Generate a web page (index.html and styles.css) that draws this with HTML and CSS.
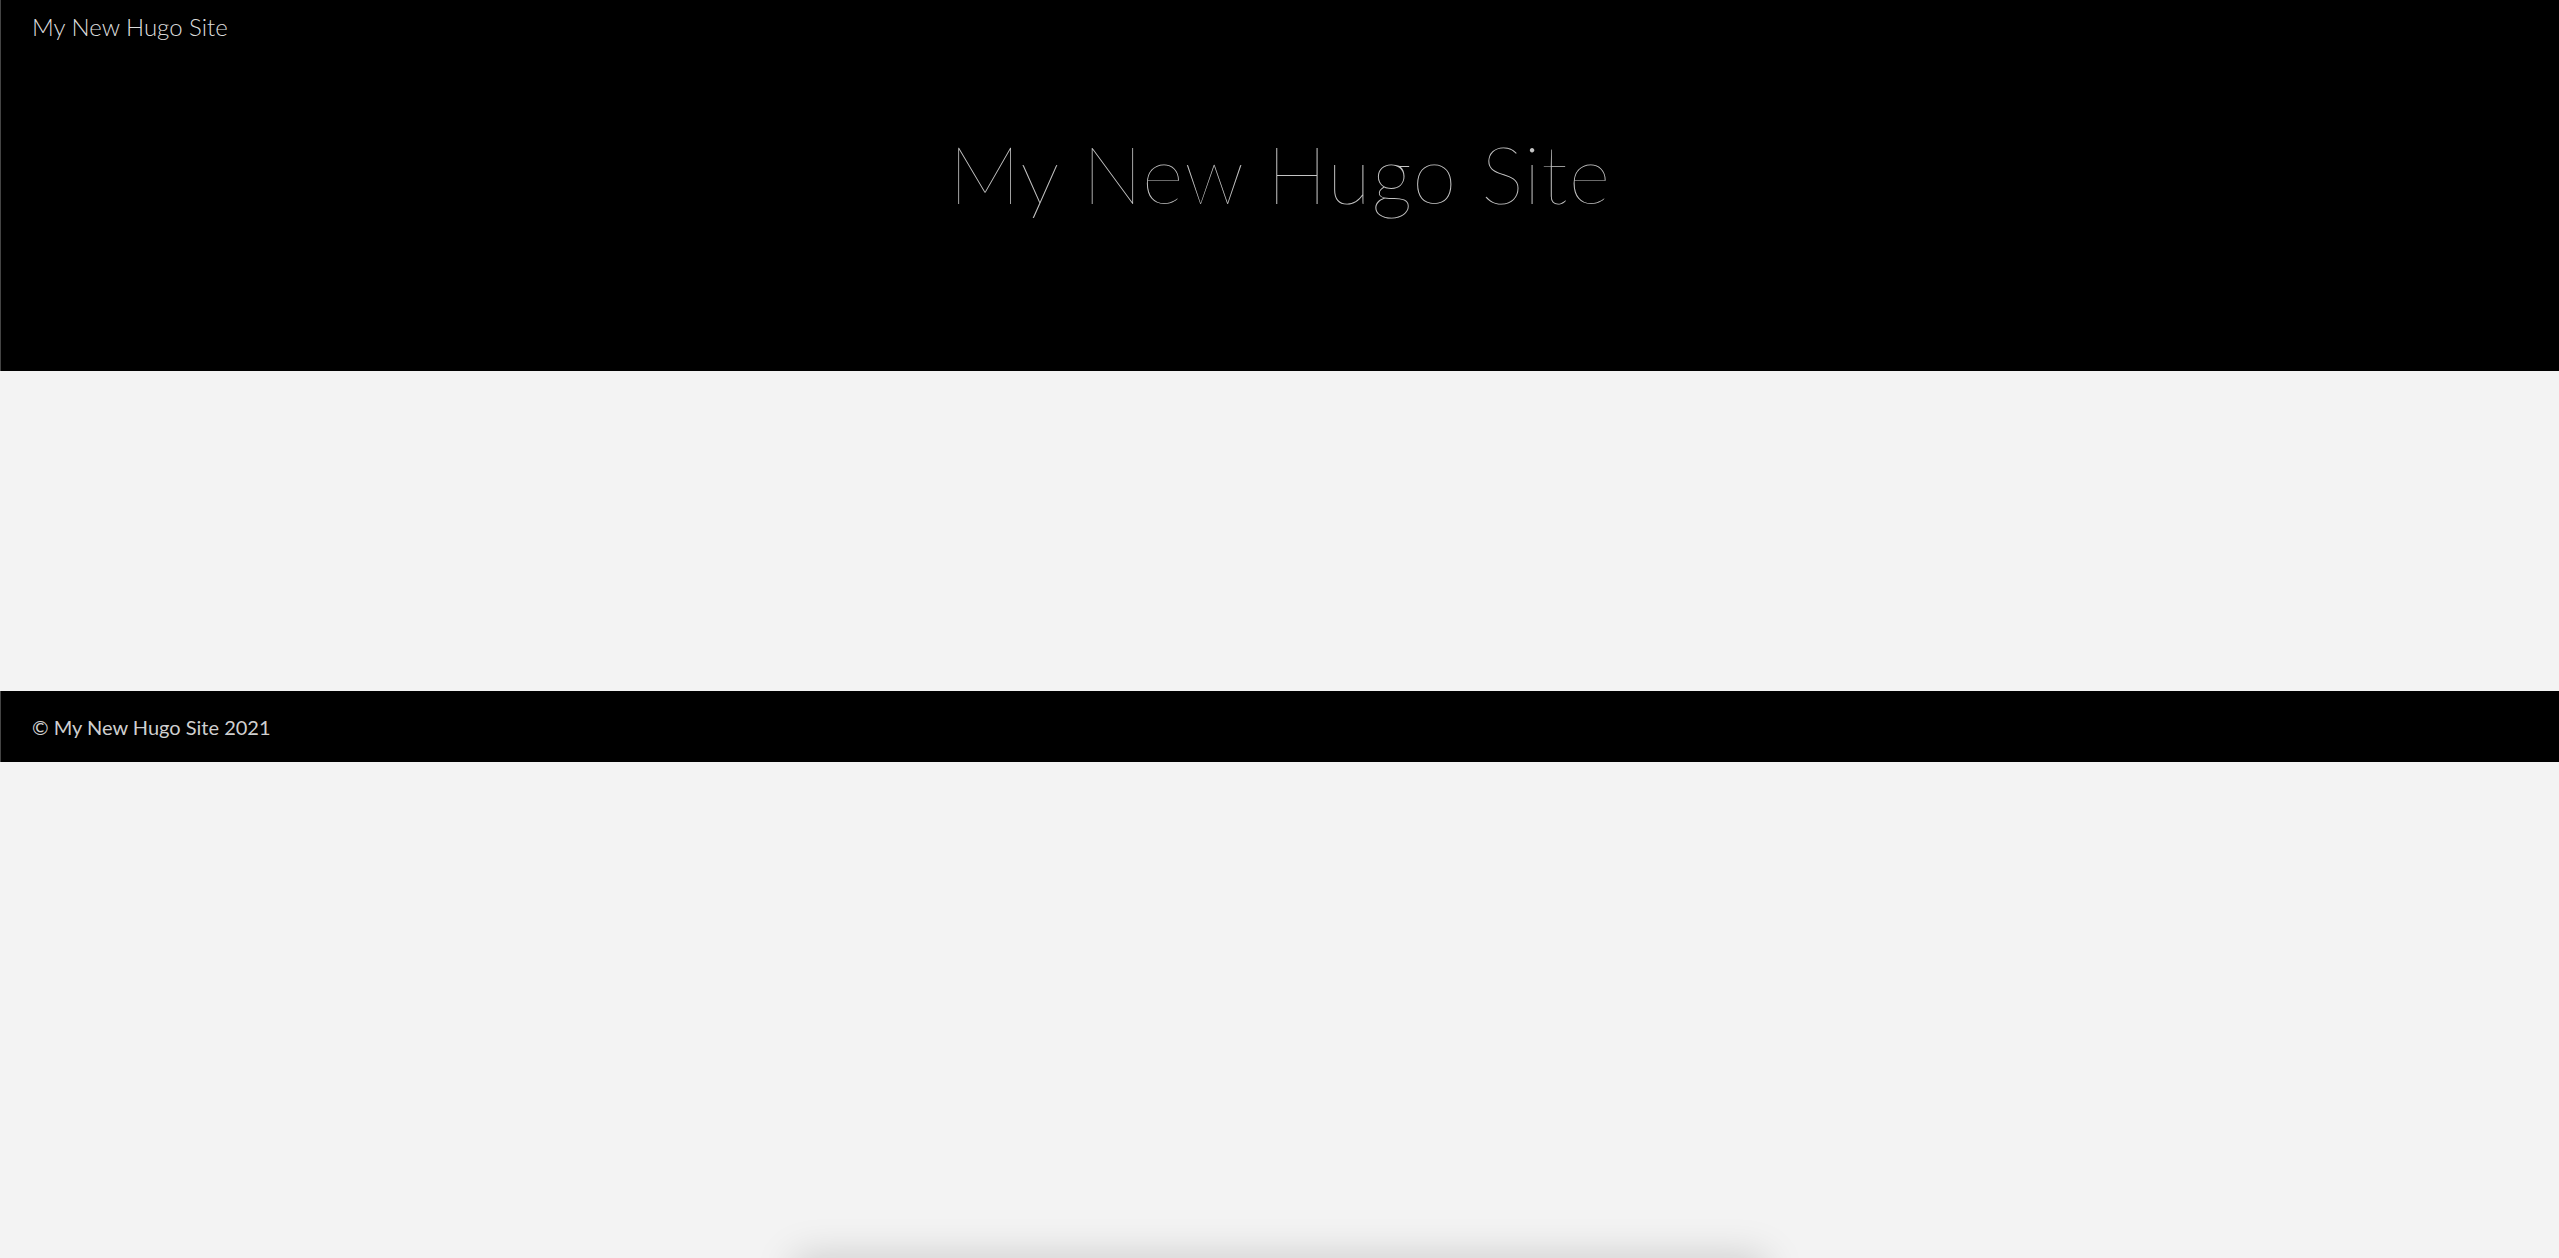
FILE: index.html
```html
<!DOCTYPE html>
<html lang="en">
<head>
<meta charset="utf-8">
<title>My New Hugo Site</title>
<link rel="stylesheet" href="styles.css">
</head>
<body>
<header class="site-header">
  <div class="brand">My New Hugo Site</div>
  <h1 class="hero-title">My New Hugo Site</h1>
</header>
<main class="content"></main>
<footer class="site-footer">
  <p class="copyright">© My New Hugo Site 2021</p>
</footer>
<div class="below">
  <div class="card"></div>
</div>
</body>
</html>
```
FILE: styles.css
```css
html, body {
  margin: 0;
  padding: 0;
}
body {
  background: #f3f3f3;
  font-family: Lato, "Noto Sans", "Liberation Sans", sans-serif;
  overflow: hidden;
}
.site-header {
  background: #000;
  height: 371px;
  box-sizing: border-box;
  border-left: 1px solid #444;
  display: flex;
  flex-direction: column;
}
.brand {
  color: #dcdcdc;
  font-size: 24px;
  font-weight: 300;
  padding: 12px 0 0 31px;
  line-height: 30px;
}
.hero-title {
  margin: 0;
  padding-top: 81px;
  text-align: center;
  color: #c4c4c4;
  font-size: 80px;
  font-weight: 100;
  line-height: 100px;
  letter-spacing: 1px;
}
.content {
  height: 320px;
}
.site-footer {
  background: #000;
  height: 71px;
  display: flex;
  align-items: center;
  border-left: 1px solid #444;
  box-sizing: border-box;
}
.copyright {
  margin: 0;
  padding-left: 31px;
  color: #cfcfcf;
  font-size: 20px;
  font-weight: 400;
}
.below {
  padding-top: 496px;
  display: flex;
  justify-content: center;
}
.card {
  width: 970px;
  height: 40px;
  background: #f3f3f3;
  box-shadow: 0 0 40px rgba(0,0,0,0.18);
}
```
